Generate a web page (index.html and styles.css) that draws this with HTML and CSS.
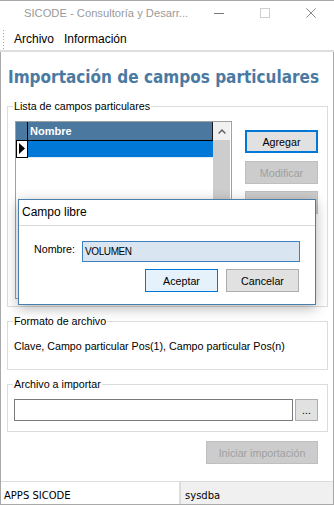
FILE: index.html
```html
<!DOCTYPE html>
<html lang="es">
<head>
<meta charset="utf-8">
<title>SICODE</title>
<link rel="stylesheet" href="styles.css">
</head>
<body>
<div class="window">
  <div class="titlebar">
    <div class="title">SICODE - Consultoría y Desarr...</div>
    <div class="caption-btn">
      <svg width="10" height="10" viewBox="0 0 10 10"><line x1="0" y1="5.5" x2="10" y2="5.5" stroke="#7a7a7a" stroke-width="1"/></svg>
    </div>
    <div class="caption-btn">
      <svg width="10" height="10" viewBox="0 0 10 10"><rect x="0.5" y="0.5" width="9" height="9" fill="none" stroke="#cfcfcf" stroke-width="1"/></svg>
    </div>
    <div class="caption-btn">
      <svg width="10" height="10" viewBox="0 0 10 10"><path d="M0.3 0.3 L9.7 9.7 M9.7 0.3 L0.3 9.7" stroke="#8a8a8a" stroke-width="1" fill="none"/></svg>
    </div>
  </div>
  <div class="menubar">
    <span class="grip"></span>
    <span class="menu-item">Archivo</span>
    <span class="menu-item">Información</span>
  </div>
  <div class="main">
    <div class="content">
      <h1 class="heading">Importación de campos particulares</h1>

      <div class="group g1">
        <div class="glabel">Lista de campos particulares</div>
        <div class="g1-body">
          <div class="grid">
            <div class="grid-main">
              <div class="grid-head">
                <div class="corner"></div>
                <div class="col-head">Nombre</div>
              </div>
              <div class="grid-row">
                <div class="row-head">
                  <svg width="6" height="11" viewBox="0 0 6 11"><polygon points="0,0 6,5.5 0,11" fill="#000"/></svg>
                </div>
                <div class="cell"></div>
              </div>
            </div>
            <div class="vscroll">
              <div class="sb-btn">
                <svg width="8" height="5" viewBox="0 0 8 5"><polyline points="0.6,4.4 4,1 7.4,4.4" fill="none" stroke="#606060" stroke-width="1.4"/></svg>
              </div>
              <div class="sb-thumb"></div>
              <div class="sb-btn"></div>
            </div>
          </div>
          <div class="side-buttons">
            <button class="btn btn-focus">Agregar</button>
            <button class="btn btn-disabled b2">Modificar</button>
            <button class="btn btn-disabled b3">Eliminar</button>
          </div>
        </div>
      </div>

      <div class="group g2">
        <div class="glabel">Formato de archivo</div>
        <div class="format-text">Clave, Campo particular Pos(1), Campo particular Pos(n)</div>
      </div>

      <div class="group g3">
        <div class="glabel">Archivo a importar</div>
        <div class="file-row">
          <div class="textbox"></div>
          <button class="btn btn-browse">...</button>
        </div>
      </div>

      <div class="actions">
        <button class="btn btn-disabled btn-start">Iniciar importación</button>
      </div>
    </div>
    <div class="statusbar">
      <div class="sp1">APPS SICODE</div>
      <div class="sp2">sysdba</div>
    </div>
  </div>

  <div class="dialog">
    <div class="dlg-title">Campo libre</div>
    <div class="dlg-body">
      <div class="dlg-row">
        <div class="dlg-label">Nombre:</div>
        <div class="dlg-input">VOLUMEN</div>
      </div>
      <div class="dlg-buttons">
        <button class="btn btn-primary">Aceptar</button>
        <button class="btn">Cancelar</button>
      </div>
    </div>
  </div>
</div>
</body>
</html>
```
FILE: styles.css
```css
* { box-sizing: border-box; }
html, body { margin: 0; padding: 0; }
body {
  width: 334px;
  height: 505px;
  overflow: hidden;
  background: #fff;
  font-family: "Liberation Sans", Arial, sans-serif;
  font-size: 10.7px;
  color: #000;
}
.window {
  position: relative;
  width: 334px;
  height: 505px;
  display: flex;
  flex-direction: column;
  border-top: 1px solid #a9a9a9;
  border-bottom: 1px solid #a9a9a9;
  background: #fff;
}
.titlebar {
  height: 27px;
  flex: none;
  display: flex;
}
.title {
  flex: 1;
  padding-left: 24px;
  font-size: 11.2px;
  line-height: 25px;
  color: #9a9a9a;
  white-space: nowrap;
  overflow: hidden;
}
.caption-btn {
  width: 46px;
  display: flex;
  justify-content: center;
  align-items: flex-start;
  padding-top: 7px;
}
.caption-btn svg { display: block; }
.menubar {
  height: 24px;
  flex: none;
  border-bottom: 2px solid #dedede;
  display: flex;
  align-items: center;
  padding-left: 3px;
  font-size: 12px;
}
.grip {
  width: 1px;
  height: 19px;
  margin-right: 5px;
  background: repeating-linear-gradient(to bottom, #a8a8a8 0 1px, transparent 1px 3px);
}
.menu-item {
  padding: 0 5px;
  line-height: 22px;
}
.main {
  flex: 1;
  display: flex;
  flex-direction: column;
  border-left: 1px solid #a9a9a9;
  border-right: 1px solid #a9a9a9;
  min-height: 0;
}
.content {
  flex: 1;
  padding: 15px 5px 0 6px;
  display: flex;
  flex-direction: column;
}
.heading {
  margin: 0 0 0 1px;
  font-family: "DejaVu Sans Condensed", "DejaVu Sans", sans-serif;
  font-weight: bold;
  font-size: 17px;
  line-height: 20px;
  color: #4a7aa2;
  white-space: nowrap;
}
.group {
  border: 1px solid #dcdcdc;
}
.glabel {
  width: fit-content;
  height: 16px;
  margin-top: -9px;
  margin-left: -1px;
  padding: 0 1px;
  line-height: 16px;
  background: #fff;
  white-space: nowrap;
}
.g1 {
  margin-top: 19px;
  padding: 0 9px 7px 7px;
}
.g1 .glabel { margin-left: -2px; }
.g1-body {
  display: flex;
  align-items: flex-start;
  margin-top: 7px;
}
.grid {
  width: 217px;
  height: 178px;
  border: 1px solid #a0a0a0;
  display: flex;
  background: #fff;
}
.grid-main {
  width: 197px;
  display: flex;
  flex-direction: column;
}
.grid-head {
  display: flex;
  height: 19px;
  border-bottom: 1px solid #000;
  background: #4a789f;
}
.corner {
  width: 12px;
  border-right: 1px solid #000;
}
.col-head {
  flex: 1;
  border-right: 1px solid #1a1a1a;
  color: #fff;
  font-weight: bold;
  font-size: 11px;
  line-height: 18px;
  padding-left: 2px;
}
.grid-row {
  display: flex;
  height: 17px;
}
.row-head {
  width: 12px;
  border-left: 1px solid #000;
  border-right: 1px solid #000;
  border-bottom: 1px solid #000;
  background: #fff;
  padding: 2px 0 0 2px;
}
.row-head svg { display: block; }
.cell {
  flex: 1;
  background: #0078d7;
  border-bottom: 1px solid #dfe9f4;
}
.vscroll {
  width: 17px;
  display: flex;
  flex-direction: column;
  background: #f0f0f0;
}
.sb-btn {
  height: 18px;
  display: flex;
  align-items: center;
  justify-content: center;
  background: #f0f0f0;
}
.sb-btn svg { display: block; }
.sb-thumb {
  flex: 1;
  background: #cdcdcd;
}
.side-buttons {
  margin-left: 13px;
  margin-top: 9px;
  display: flex;
  flex-direction: column;
}
.btn {
  -webkit-appearance: none;
  appearance: none;
  width: 73px;
  height: 23px;
  padding: 0;
  margin: 0;
  font-family: inherit;
  font-size: 10.7px;
  text-align: center;
  border: 1px solid #adadad;
  background: #e1e1e1;
  color: #000;
  white-space: nowrap;
}
.btn-focus {
  border: 2px solid #0078d7;
}
.btn-disabled {
  background: #cccccc;
  border-color: #bfbfbf;
  color: #a0a0a0;
}
.btn-primary {
  border-color: #0078d7;
  background: #e5f1fb;
}
.b2 { margin-top: 8px; }
.b3 { margin-top: 7px; }
.g2 {
  margin-top: 14px;
  padding: 0 9px 15px 6px;
}
.format-text {
  margin-top: 9px;
  line-height: 16px;
  white-space: nowrap;
}
.g3 {
  margin-top: 14px;
  padding: 0 9px 10px 6px;
}
.file-row {
  display: flex;
  gap: 2px;
  margin-top: 7px;
}
.textbox {
  width: 279px;
  height: 22px;
  border: 1px solid #7a7a7a;
  background: #fff;
}
.btn-browse {
  width: 23px;
  height: 22px;
  line-height: 14px;
}
.actions {
  display: flex;
  justify-content: flex-end;
  margin-top: 9px;
  padding-right: 10px;
}
.btn-start { width: 112px; }
.statusbar {
  height: 23px;
  flex: none;
  border-top: 1px solid #dcdcdc;
  display: flex;
  font-family: "DejaVu Sans", sans-serif;
  font-size: 10px;
}
.sp1 {
  width: 178px;
  background: #fff;
  padding: 6px 0 0 3px;
  line-height: 16px;
}
.sp2 {
  flex: 1;
  background: #f0f0f0;
  border-left: 2px solid #dcdcdc;
  padding: 6px 0 0 4px;
  line-height: 16px;
}
.dialog {
  position: absolute;
  left: 18px;
  top: 198px;
  width: 298px;
  height: 106px;
  border: 1px solid #4a7fac;
  background: #fff;
  box-shadow: 0 3px 12px rgba(0, 0, 0, 0.3);
  display: flex;
  flex-direction: column;
}
.dlg-title {
  height: 26px;
  line-height: 25px;
  padding-left: 3px;
  font-size: 12px;
  border-bottom: 1px solid #dadada;
}
.dlg-body {
  padding: 15px 15px 0 15px;
}
.dlg-row {
  display: flex;
  align-items: flex-start;
}
.dlg-label {
  width: 48px;
  line-height: 16px;
}
.dlg-input {
  width: 218px;
  height: 21px;
  border: 1px solid #3f80c0;
  background: #d9e6f2;
  font-size: 10px;
  letter-spacing: -0.4px;
  padding-left: 2px;
  line-height: 19px;
}
.dlg-buttons {
  display: flex;
  justify-content: flex-end;
  gap: 8px;
  margin-top: 7px;
  margin-right: 1px;
}
```
